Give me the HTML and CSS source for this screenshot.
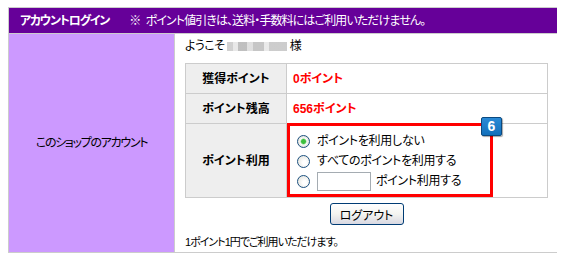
FILE: index.html
```html
<!DOCTYPE html>
<html lang="ja">
<head>
  <meta charset="utf-8">
  <meta name="viewport" content="width=device-width, initial-scale=1.0">
  <title>アカウントログイン</title>
  <link rel="stylesheet" href="styles.css">
</head>
<body>

  <div class="box">
    <div class="box-head">
      <strong>アカウントログイン</strong>
      <span class="note">※ ポイント値引きは、送料・手数料にはご利用いただけません。</span>
    </div>

    <div class="box-body">
      <div class="side">このショップのアカウント</div>

      <div class="content">
        <p class="welcome">ようこそ <span class="user-blur"></span> 様</p>

        <table class="points">
          <tr>
            <th>獲得ポイント</th>
            <td class="red">0ポイント</td>
          </tr>
          <tr>
            <th>ポイント残高</th>
            <td class="red">656ポイント</td>
          </tr>
          <tr>
            <th>ポイント利用</th>
            <td class="use">
              <label class="opt"><input type="radio" name="use" checked> ポイントを利用しない</label>
              <label class="opt"><input type="radio" name="use"> すべてのポイントを利用する</label>
              <label class="opt"><input type="radio" name="use"> <input type="text" class="amount"> ポイント利用する</label>

              <!-- annotation frame -->
              <div class="mark">
                <span class="badge">6</span>
              </div>
            </td>
          </tr>
        </table>

        <div class="actions">
          <button type="button">ログアウト</button>
        </div>

        <p class="foot">1ポイント1円でご利用いただけます。</p>
      </div>
    </div>
  </div>

</body>
</html>
```

FILE: styles.css
```css
* {
  font-family: "Liberation Sans", "Noto Sans CJK JP", sans-serif;
  font-feature-settings: "palt";
}

body {
  margin: 7px 8px;
  font-size: 12px;
  line-height: 18px;
  color: #000;
}

.box {
  width: 549px;
  border: 1px solid #cccccc;
}

.box-head {
  height: 25px;
  background-color: #660099;
  border-bottom: 1px solid #cccccc;
  color: #fff;
  display: flex;
  align-items: center;
  padding-left: 11px;
}

.box-head strong {
  font-weight: 700;
  letter-spacing: -1.2px;
  margin-right: 20px;
}

.box-head .note {
  letter-spacing: -0.9px;
  word-spacing: 3px;
}

.box-body {
  display: flex;
}

.side {
  width: 165px;
  background-color: #cc99ff;
  border-right: 1px solid #cccccc;
  display: flex;
  align-items: center;
  justify-content: center;
  letter-spacing: -1.3px;
}

.content {
  flex: 1;
  padding: 3px 10px 2px 10px;
}

.welcome {
  margin: 0 0 8px 0;
  letter-spacing: -0.6px;
}

.user-blur {
  display: inline-block;
  width: 60px;
  height: 9px;
  vertical-align: -1px;
  background: linear-gradient(90deg, #c8c8c8 0 10%, #e4e4e4 10% 18%, #b4b4b4 18% 34%, #dadada 34% 44%, #bcbcbc 44% 62%, #e6e6e6 62% 70%, #c4c4c4 70% 100%);
  opacity: 0.85;
}

.points {
  width: 363px;
  border-collapse: collapse;
  border: 1px solid #cccccc;
}

.points th,
.points td {
  border: 1px solid #cccccc;
  padding: 0;
  height: 29px;
}

.points th {
  width: 100px;
  background-color: #eeeeee;
  font-weight: 700;
  text-align: center;
}

.points td {
  padding-left: 6px;
  text-align: left;
}

.points td.red {
  color: #ff0000;
  font-weight: 700;
}

.points td.use {
  position: relative;
  height: 60px;
  padding: 7px 0 6px 10px;
  vertical-align: top;
  letter-spacing: -0.3px;
}

.opt {
  display: flex;
  align-items: center;
  height: 20px;
  gap: 5px;
}

input[type="radio"] {
  appearance: none;
  width: 13px;
  height: 13px;
  margin: 0 2px 0 0;
  border: 1px solid #1c5180;
  border-radius: 50%;
  background: radial-gradient(circle at 60% 60%, #ffffff 20%, #dcdcd4 100%);
}

input[type="radio"]:checked {
  background: radial-gradient(circle, #3cbf3c 0 2px, #8ad88a 2.5px, #ffffff 3.5px, #f2f2ee 50%, #d0d0c8 100%);
}

.amount {
  width: 54px;
  height: 19px;
  box-sizing: border-box;
  border: 1px solid #a5acb2;
  margin: 0;
  padding: 0;
}

.mark {
  position: absolute;
  top: -1px;
  left: 0;
  width: 206px;
  height: 74px;
  box-sizing: border-box;
  border: 3px solid #ff0000;
}

.badge {
  position: absolute;
  top: -9px;
  left: 191px;
  width: 21px;
  height: 19px;
  box-sizing: border-box;
  border: 1px solid #0b4a80;
  border-radius: 2px;
  background: linear-gradient(#2a8ad6, #1270bb);
  color: #fff;
  font-weight: 700;
  font-size: 14px;
  line-height: 17px;
  text-align: center;
  letter-spacing: 0;
  box-shadow: 1px 1px 1px rgba(0, 0, 0, 0.35);
}

.actions {
  margin-top: 5px;
  text-align: center;
  height: 22px;
}

button {
  width: 74px;
  height: 22px;
  padding: 0;
  border: 1px solid #003c74;
  border-radius: 3px;
  background: linear-gradient(#ffffff, #f4f4f0 50%, #d8d8e2);
  font-size: 12px;
  color: #000;
  cursor: pointer;
}

.foot {
  margin: 9px 0 0 0;
  font-size: 11px;
  line-height: 16px;
  letter-spacing: -1px;
}
```
